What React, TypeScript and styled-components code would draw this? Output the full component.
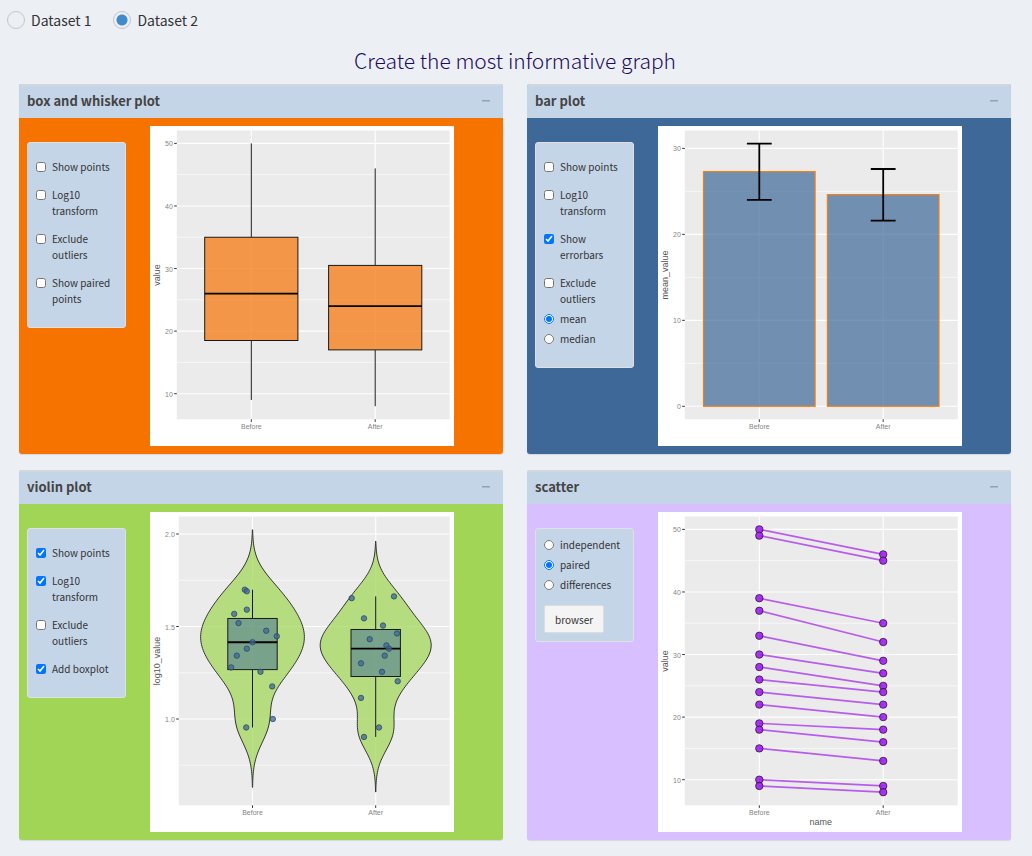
import React, { useId, useState } from "react";
import styled, { createGlobalStyle } from "styled-components";

const GlobalStyle = createGlobalStyle`
  * { box-sizing: border-box; }
  body {
    margin: 0;
    background: #ecf0f5;
    color: #333;
    font-family: "Noto Sans CJK SC", "Open Sans", sans-serif;
  }
`;

/* ---------- layout ---------- */

const Page = styled.main`
  padding: 8px 21px 16px 19px;
`;

const DatasetBar = styled.div`
  display: flex;
  gap: 22px;
  height: 24px;
  margin-left: -12px;
`;

const DatasetLabel = styled.label`
  display: flex;
  align-items: center;
  gap: 6px;
  font-size: 14px;
  line-height: 24px;
`;

const DatasetRadio = styled.input`
  appearance: none;
  width: 18px;
  height: 18px;
  margin: 0;
  border: 1px solid #c3c7cd;
  border-radius: 50%;
  &:checked {
    background: radial-gradient(circle, #428bca 5px, transparent 6px);
  }
`;

const Title = styled.h1`
  margin: 12px 0 8px;
  font-size: 21px;
  line-height: 32px;
  font-weight: 300;
  text-align: center;
  color: #1c0a5e;
`;

const Grid = styled.div`
  display: grid;
  grid-template-columns: 1fr 1fr;
  gap: 16px 24px;
`;

const Card = styled.section<{ $tone: string }>`
  background: ${(p) => p.$tone};
  border-radius: 3px;
  box-shadow: 0 1px 1px rgba(0, 0, 0, 0.1);
  overflow: hidden;
`;

const CardHeader = styled.header`
  display: flex;
  align-items: center;
  justify-content: space-between;
  height: 34px;
  padding: 0 8px 2px;
  background: #c5d5e8;
  border-top: 2px solid #d2d6de;
`;

const CardTitle = styled.h2`
  margin: 0;
  font-size: 13px;
  line-height: 24px;
  font-weight: 700;
  color: #444;
`;

const CollapseButton = styled.button`
  display: flex;
  align-items: center;
  justify-content: center;
  width: 18px;
  height: 20px;
  padding: 0;
  border: 0;
  background: none;
  color: #97a0b3;
`;

const CardBody = styled.div`
  display: flex;
  align-items: flex-start;
  gap: 24px;
  padding: 8px;
`;

const Well = styled.form`
  flex: 0 0 99px;
  margin-top: 16px;
  padding: 8px;
  background: #c5d5e8;
  border: 1px solid #e0e0e3;
  border-radius: 3px;
`;

const OptionGroup = styled.fieldset<{ $kind: "checkbox" | "radio" }>`
  display: flex;
  flex-direction: column;
  gap: ${(p) => (p.$kind === "checkbox" ? 12 : 4)}px;
  min-width: 0;
  margin: 0;
  padding: ${(p) => (p.$kind === "checkbox" ? 8 : 0)}px 0 12px;
  border: 0;
  & + & {
    margin-top: -8px;
  }
`;

const OptionLabel = styled.label`
  display: flex;
  align-items: flex-start;
  gap: 6px;
  font-size: 10px;
  line-height: 16px;
`;

const OptionInput = styled.input`
  flex: none;
  width: 10px;
  height: 10px;
  margin: 3px 0 0;
`;

const BrowserButton = styled.button`
  display: block;
  height: 28px;
  padding: 0 10px;
  border: 1px solid #ddd;
  border-radius: 2px;
  background: #f4f4f4;
  color: #333;
  font-family: inherit;
  font-size: 10px;
`;

const PlotSvg = styled.svg`
  display: block;
  flex: 0 1 304px;
  min-width: 0;
  height: auto;
  background: #fff;
  font-family: "Liberation Sans", Arial, sans-serif;
`;

const TickText = styled.text`
  font-size: 7px;
  fill: #858585;
`;

const AxisText = styled.text`
  font-size: 9px;
  fill: #555;
  text-anchor: middle;
`;

/* ---------- data ---------- */

const before = [50, 49, 39, 37, 33, 30, 28, 26, 24, 22, 19, 18, 15, 10, 9];
const after = [46, 45, 35, 32, 29, 27, 25, 24, 22, 20, 18, 16, 13, 9, 8];
const categories = ["Before", "After"];

const quantile = (values: number[], q: number) => {
  const sorted = [...values].sort((a, b) => a - b);
  const pos = (sorted.length - 1) * q;
  const low = Math.floor(pos);
  const high = Math.ceil(pos);
  return sorted[low] + (sorted[high] - sorted[low]) * (pos - low);
};

const density = (values: number[]) => {
  const n = values.length;
  const mean = values.reduce((a, b) => a + b, 0) / n;
  const sd = Math.sqrt(values.reduce((a, b) => a + (b - mean) ** 2, 0) / (n - 1));
  const iqr = quantile(values, 0.75) - quantile(values, 0.25);
  const bw = 0.9 * Math.min(sd, iqr / 1.34) * n ** -0.2;
  const low = Math.min(...values) - 3 * bw;
  const high = Math.max(...values) + 3 * bw;
  return Array.from({ length: 129 }, (_, i) => {
    const at = low + ((high - low) * i) / 128;
    const d = values.reduce((a, v) => a + Math.exp(-0.5 * ((at - v) / bw) ** 2), 0);
    return { at, d: d / (n * bw) };
  });
};

/* ---------- plots ---------- */

type Scale = (v: number) => number;

type FrameProps = {
  label: string;
  left?: number;
  xs: number[];
  y: Scale;
  major: number[];
  minor: number[];
  format?: (v: number) => string;
  yLabel: string;
  xLabel?: string;
  children: React.ReactNode;
};

const RIGHT = 299.7;
const TOP = 4.5;
const BOTTOM = 293.3;

function PlotFrame({ label, left = 26.8, xs, y, major, minor, format = String, yLabel, xLabel, children }: FrameProps) {
  return (
    <PlotSvg viewBox="0 0 304 320" width="304" height="320" role="img" aria-label={label}>
      <rect x={left} y={TOP} width={RIGHT - left} height={BOTTOM - TOP} fill="#ebebeb" />
      {minor.map((v) => (
        <line key={v} x1={left} x2={RIGHT} y1={y(v)} y2={y(v)} stroke="#fff" strokeWidth="0.6" />
      ))}
      {major.map((v) => (
        <g key={v}>
          <line x1={left} x2={RIGHT} y1={y(v)} y2={y(v)} stroke="#fff" strokeWidth="1.1" />
          <line x1={left - 2.6} x2={left} y1={y(v)} y2={y(v)} stroke="#333" strokeWidth="1" />
          <TickText x={left - 4} y={y(v) + 3} textAnchor="end">
            {format(v)}
          </TickText>
        </g>
      ))}
      {xs.map((x, i) => (
        <g key={x}>
          <line x1={x} x2={x} y1={TOP} y2={BOTTOM} stroke="#fff" strokeWidth="1.1" />
          <line x1={x} x2={x} y1={BOTTOM} y2={BOTTOM + 2.6} stroke="#333" strokeWidth="1" />
          <TickText x={x} y={303} textAnchor="middle">
            {categories[i]}
          </TickText>
        </g>
      ))}
      {children}
      <AxisText transform="translate(10 149) rotate(-90)">{yLabel}</AxisText>
      {xLabel && (
        <AxisText x={162.7} y={313}>
          {xLabel}
        </AxisText>
      )}
    </PlotSvg>
  );
}

const XS = [101.3, 225.2];
const valueScale: Scale = (v) => 267.7 - (v - 10) * 6.258;

function Box({ x, half, values, y, fill }: { x: number; half: number; values: number[]; y: Scale; fill: string }) {
  const q1 = y(quantile(values, 0.25));
  const q2 = y(quantile(values, 0.5));
  const q3 = y(quantile(values, 0.75));
  return (
    <g stroke="#1a1a1a">
      <line x1={x} x2={x} y1={y(Math.max(...values))} y2={q3} />
      <line x1={x} x2={x} y1={q1} y2={y(Math.min(...values))} />
      <rect x={x - half} y={q3} width={half * 2} height={q1 - q3} fill={fill} />
      <line x1={x - half} x2={x + half} y1={q2} y2={q2} stroke="#000" strokeWidth="1.8" />
    </g>
  );
}

function BoxPlot() {
  return (
    <PlotFrame label="Box and whisker plot" xs={XS} y={valueScale} major={[10, 20, 30, 40, 50]} minor={[15, 25, 35, 45]} yLabel="value">
      {[before, after].map((values, i) => (
        <Box key={i} x={XS[i]} half={46.6} values={values} y={valueScale} fill="rgba(245,127,27,0.79)" />
      ))}
    </PlotFrame>
  );
}

function BarPlot() {
  const y: Scale = (v) => 280.3 - v * 8.597;
  const bars = [
    { mean: 27.3, low: 24, high: 30.55 },
    { mean: 24.62, low: 21.6, high: 27.6 },
  ];
  return (
    <PlotFrame label="Bar plot" xs={XS} y={y} major={[0, 10, 20, 30]} minor={[5, 15, 25]} yLabel="mean_value">
      {bars.map(({ mean, low, high }, i) => {
        const x = XS[i];
        return (
          <g key={i}>
            <rect x={x - 55.8} y={y(mean)} width={111.6} height={y(0) - y(mean)} fill="rgba(61,104,152,0.7)" />
            <rect x={x - 55.8} y={y(mean)} width={111.6} height={y(0) - y(mean)} fill="none" stroke="#f57f17" strokeWidth="1.2" />
            <path
              d={`M${x - 12.4} ${y(high)}h24.8M${x} ${y(high)}V${y(low)}M${x - 12.4} ${y(low)}h24.8`}
              stroke="#000"
              strokeWidth="1.8"
              fill="none"
            />
          </g>
        );
      })}
    </PlotFrame>
  );
}

const jitter = [
  [-7.7, -5.7, -5.7, -18.3, -14, 13.7, 24.3, 0, -5.7, -15.7, -21.3, 8, 19.7, 20.3, -6.3],
  [18.3, -24, -11.7, 7.3, 21.3, -6, 10.7, 13.3, 9, -14.7, 6.3, 22, -14.7, 3.3, -11.7],
];

function ViolinPlot() {
  const y: Scale = (v) => 207 - (v - 1) * 185;
  const xs = [102.5, 225.7];
  const groups = [before, after].map((values) => values.map((v) => Math.log10(v)));
  const curves = groups.map(density);
  const peak = Math.max(...curves.flat().map((p) => p.d));
  return (
    <PlotFrame
      label="Violin plot"
      left={28.8}
      xs={xs}
      y={y}
      major={[1, 1.5, 2]}
      minor={[0.75, 1.25, 1.75]}
      format={(v) => v.toFixed(1)}
      yLabel="log10_value"
    >
      {groups.map((values, i) => {
        const x = xs[i];
        const edge = (side: number) => curves[i].map((p) => `${x + (side * p.d * 55.5) / peak},${y(p.at)}`);
        const outline = [...edge(-1), ...edge(1).reverse()].join(" ");
        return (
          <g key={i}>
            <polygon points={outline} fill="rgba(160,213,85,0.72)" stroke="#333" strokeWidth="1" />
            <Box x={x} half={24.7} values={values} y={y} fill="rgba(61,104,152,0.5)" />
            {values.map((v, j) => (
              <circle key={j} cx={x + jitter[i][j]} cy={y(v)} r="2.7" fill="rgba(61,104,152,0.75)" stroke="#2c4a62" strokeWidth="0.8" />
            ))}
          </g>
        );
      })}
    </PlotFrame>
  );
}

function ScatterPlot() {
  const y = valueScale;
  return (
    <PlotFrame label="Scatter plot" xs={XS} y={y} major={[10, 20, 30, 40, 50]} minor={[15, 25, 35, 45]} yLabel="value" xLabel="name">
      {before.map((v, i) => (
        <line key={i} x1={XS[0]} x2={XS[1]} y1={y(v)} y2={y(after[i])} stroke="#a020f0" strokeOpacity="0.7" strokeWidth="1.7" />
      ))}
      {[before, after].map((values, i) =>
        values.map((v) => (
          <circle key={`${i}-${v}`} cx={XS[i]} cy={y(v)} r="3.7" fill="#a020f0" fillOpacity="0.9" stroke="#2a1038" strokeOpacity="0.85" strokeWidth="0.9" />
        )),
      )}
    </PlotFrame>
  );
}

/* ---------- controls ---------- */

type Option = { text: string; on?: boolean };

function Options({ kind, items }: { kind: "checkbox" | "radio"; items: Option[] }) {
  const name = useId();
  return (
    <OptionGroup $kind={kind}>
      {items.map(({ text, on }) => (
        <OptionLabel key={text}>
          <OptionInput type={kind} name={name} defaultChecked={on} />
          <span>{text}</span>
        </OptionLabel>
      ))}
    </OptionGroup>
  );
}

type PlotCardProps = { title: string; tone: string; controls: React.ReactNode; children: React.ReactNode };

function PlotCard({ title, tone, controls, children }: PlotCardProps) {
  const [open, setOpen] = useState(true);
  return (
    <Card $tone={tone}>
      <CardHeader>
        <CardTitle>{title}</CardTitle>
        <CollapseButton type="button" aria-label={`Collapse ${title}`} aria-expanded={open} onClick={() => setOpen(!open)}>
          <svg width="10" height="10" viewBox="0 0 10 10" aria-hidden="true">
            <rect x="1" y="4" width="8" height="1.5" rx="0.5" fill="currentColor" />
          </svg>
        </CollapseButton>
      </CardHeader>
      {open && (
        <CardBody>
          <Well>{controls}</Well>
          {children}
        </CardBody>
      )}
    </Card>
  );
}

export default function App() {
  return (
    <>
      <GlobalStyle />
      <Page>
        <DatasetBar role="radiogroup" aria-label="Dataset">
          <DatasetLabel>
            <DatasetRadio type="radio" name="dataset" />
            Dataset 1
          </DatasetLabel>
          <DatasetLabel>
            <DatasetRadio type="radio" name="dataset" defaultChecked />
            Dataset 2
          </DatasetLabel>
        </DatasetBar>
        <Title>Create the most informative graph</Title>
        <Grid>
          <PlotCard
            title="box and whisker plot"
            tone="#f77300"
            controls={
              <Options
                kind="checkbox"
                items={[{ text: "Show points" }, { text: "Log10 transform" }, { text: "Exclude outliers" }, { text: "Show paired points" }]}
              />
            }
          >
            <BoxPlot />
          </PlotCard>
          <PlotCard
            title="bar plot"
            tone="#3d6898"
            controls={
              <>
                <Options
                  kind="checkbox"
                  items={[
                    { text: "Show points" },
                    { text: "Log10 transform" },
                    { text: "Show errorbars", on: true },
                    { text: "Exclude outliers" },
                  ]}
                />
                <Options kind="radio" items={[{ text: "mean", on: true }, { text: "median" }]} />
              </>
            }
          >
            <BarPlot />
          </PlotCard>
          <PlotCard
            title="violin plot"
            tone="#a0d555"
            controls={
              <Options
                kind="checkbox"
                items={[
                  { text: "Show points", on: true },
                  { text: "Log10 transform", on: true },
                  { text: "Exclude outliers" },
                  { text: "Add boxplot", on: true },
                ]}
              />
            }
          >
            <ViolinPlot />
          </PlotCard>
          <PlotCard
            title="scatter"
            tone="#d8bfff"
            controls={
              <>
                <Options kind="radio" items={[{ text: "independent" }, { text: "paired", on: true }, { text: "differences" }]} />
                <BrowserButton type="button">browser</BrowserButton>
              </>
            }
          >
            <ScatterPlot />
          </PlotCard>
        </Grid>
      </Page>
    </>
  );
}
